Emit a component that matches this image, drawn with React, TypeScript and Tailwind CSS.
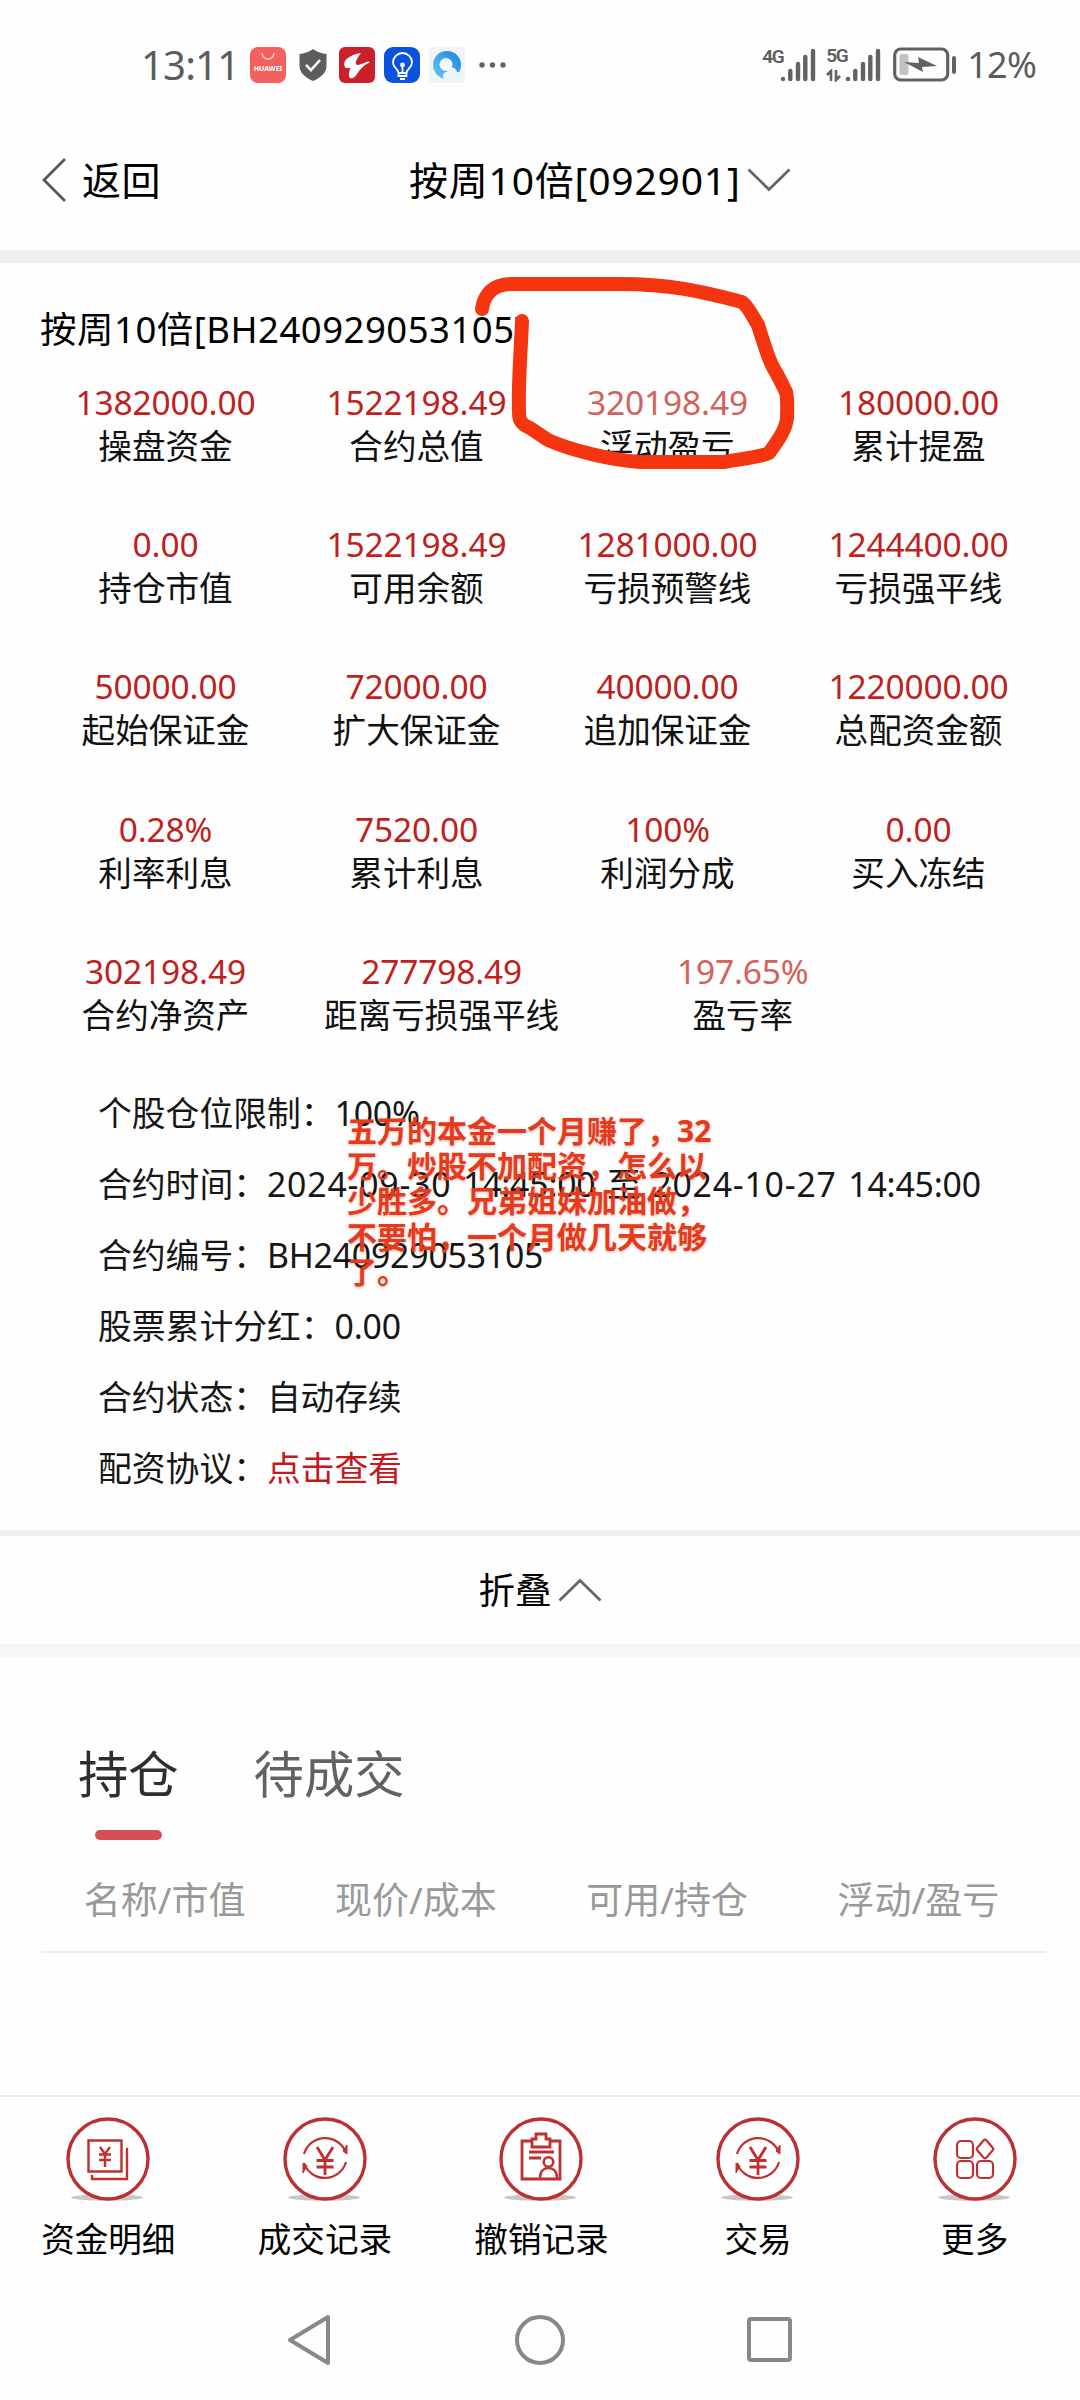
import React from 'react'

interface Metric {
  value: string
  label: string
  soft?: boolean
  width?: string
}

const metrics: Metric[] = [
  { value: '1382000.00', label: '操盘资金' },
  { value: '1522198.49', label: '合约总值' },
  { value: '320198.49', label: '浮动盈亏', soft: true },
  { value: '180000.00', label: '累计提盈' },
  { value: '0.00', label: '持仓市值' },
  { value: '1522198.49', label: '可用余额' },
  { value: '1281000.00', label: '亏损预警线' },
  { value: '1244400.00', label: '亏损强平线' },
  { value: '50000.00', label: '起始保证金' },
  { value: '72000.00', label: '扩大保证金' },
  { value: '40000.00', label: '追加保证金' },
  { value: '1220000.00', label: '总配资金额' },
  { value: '0.28%', label: '利率利息' },
  { value: '7520.00', label: '累计利息' },
  { value: '100%', label: '利润分成' },
  { value: '0.00', label: '买入冻结' },
  { value: '302198.49', label: '合约净资产' },
  { value: '277798.49', label: '距离亏损强平线', width: 'w-[30%]' },
  { value: '197.65%', label: '盈亏率', soft: true, width: 'w-[30%]' }
]

const details = [
  { label: '个股仓位限制：', value: '100%' },
  {
    label: '合约时间：',
    value: (
      <span className="[word-spacing:3px]">
        <span className="tracking-[0.800px]">2024-09-30</span> 14:45:00 至 <span className="tracking-[0.800px]">2024-10-27</span> 14:45:00
      </span>
    )
  },
  { label: '合约编号：', value: 'BH240929053105' },
  { label: '股票累计分红：', value: '0.00' },
  { label: '合约状态：', value: '自动存续' },
  { label: '配资协议：', value: '点击查看', link: true }
]

const noteLines = [
  '五万的本金一个月赚了，32',
  '万。炒股不加配资，怎么以',
  '少胜多。兄弟姐妹加油做，',
  '不要怕，一个月做几天就够',
  '了。'
]

const SignalBars: React.FC = () => (
  <svg width="36" height="34" viewBox="0 0 36 34" stroke="#626262" strokeWidth="4.4" strokeLinecap="round">
    <path d="M3 31v.1M10.3 23v8M18 16v15M25.3 9v22M33 3v28" />
  </svg>
)

const StatusBar: React.FC = () => (
  <div className="flex h-[130px] items-start justify-between pl-[141px] pr-[44px] pt-[45px] text-[#5c5c5c]">
    <div className="flex h-10 items-center">
      <span className="w-[109px] text-[40px] leading-10 tracking-[-0.8px]">13:11</span>
      <div className="flex h-9 w-9 flex-col items-center rounded-lg bg-[#f4605f]">
        <svg width="14" height="18" viewBox="0 0 14 18" fill="none" stroke="#ffd5d0" strokeWidth="1.4">
          <path d="M1 6a6 6 0 0 0 12 0" />
        </svg>
        <span className="text-[7px] font-bold leading-[7px] text-white">HUAWEI</span>
      </div>
      <svg className="ml-3" width="30" height="34" viewBox="0 0 30 34">
        <path d="M15 1C11 4 6 5.500 1.500 6v12c0 7 6 11.500 13.500 15 7.500-3.500 13.500-8 13.500-15V6C24 5.500 19 4 15 1z" fill="#5d5d5d" />
        <path d="M8 17l5 5 9-10" fill="none" stroke="#fff" strokeWidth="2.600" />
      </svg>
      <svg className="ml-[11px]" width="36" height="36" viewBox="0 0 36 36">
        <rect width="36" height="36" rx="6" fill="#cb1f2c" />
        <path d="M22 6C14 7 7 11 5.500 15c-1 4 1 7 4 6l2-.5C10 25 9 29 11 31c3 1 5-1 7-4 3-5 7-9 13-12l-2-.5-8 3c-3 1-5 0-4-3 1-3 3-6 5-8.500z" fill="#fff" />
      </svg>
      <svg className="ml-[9px]" width="36" height="36" viewBox="0 0 36 36" fill="none" stroke="#fff" strokeWidth="1.800">
        <rect width="36" height="36" rx="9" fill="#0b52e0" stroke="none" />
        <path d="M14.500 26c0-4-5.500-5-5.500-10.500a9.500 9.500 0 0 1 19 0c0 5.500-5.500 6.500-5.500 10.500zM14.500 26v3h8v-3M16 32h5M18.500 26v-7" />
        <circle cx="18.500" cy="18" r="1.500" fill="#fff" />
      </svg>
      <svg className="ml-[9px]" width="36" height="36" viewBox="0 0 36 36">
        <defs>
          <linearGradient id="ring" x1="0" y1="1" x2="1" y2="0">
            <stop offset="0" stopColor="#6cc9f5" />
            <stop offset="1" stopColor="#1683dc" />
          </linearGradient>
        </defs>
        <rect width="36" height="36" fill="#f3f4f6" />
        <circle cx="18" cy="18" r="14" fill="url(#ring)" />
        <circle cx="17" cy="17.500" r="6.500" fill="#f3f8fc" />
        <path d="M18 33c-6-1-5-8 0-8 1-6 9-6 10 0 7 0 7 8 1 8z" fill="#eaf5fd" />
      </svg>
      <svg className="ml-[14px]" width="28" height="6" viewBox="0 0 28 6" fill="#626262">
        <circle cx="3" cy="3" r="2.700" />
        <circle cx="13.500" cy="3" r="2.700" />
        <circle cx="24" cy="3" r="2.700" />
      </svg>
    </div>
    <div className="flex h-10 items-center">
      <span className="mb-[17px] w-[18px] font-['Roboto'] text-[19px] font-semibold leading-[19px] tracking-[-1.500px]">4G</span>
      <SignalBars />
      <div className="ml-[10px] flex h-[34px] w-[19px] flex-col justify-between">
        <span className="font-['Roboto'] text-[19px] font-semibold leading-[16px] tracking-[-1.500px]">5G</span>
        <svg width="17" height="13" viewBox="0 0 17 13" fill="none" stroke="#626262" strokeWidth="2.600">
          <path d="M1 6l4-4v10M10 1v10l4-4" />
        </svg>
      </div>
      <SignalBars />
      <svg className="ml-[12px]" width="65" height="36" viewBox="0 0 65 36">
        <rect x="1.700" y="2" width="53" height="31" rx="6" fill="none" stroke="#626262" strokeWidth="3.200" />
        <rect x="6.500" y="7" width="9" height="21" rx="2.500" fill="#c2c2c2" />
        <path d="M11 15l15 1-1-6 19 9-15 1 1 5z" fill="#626262" />
        <path d="M61 11v14" stroke="#626262" strokeWidth="4" strokeLinecap="round" />
      </svg>
      <span className="ml-[9px] text-[36px] leading-10 tracking-[-0.800px]">12%</span>
    </div>
  </div>
)

const Header: React.FC = () => (
  <header className="flex h-[120px] items-start pl-[41px] pt-[24px] text-[39px] leading-[52px] text-black">
    <div className="flex w-[368px] items-center">
      <svg width="26" height="44" viewBox="0 0 26 44" fill="none" stroke="#555" strokeWidth="2.800">
        <path d="M24 1L3 22l21 21" />
      </svg>
      <span className="ml-[15px] tracking-[0.400px]">返回</span>
    </div>
    <div className="flex items-center">
      <span className="tracking-[0.800px]">按周10倍[092901]</span>
      <svg className="ml-[6px]" width="44" height="24" viewBox="0 0 44 24" fill="none" stroke="#666" strokeWidth="2.800">
        <path d="M1.500 1.500L22 21.500l20.500-20" />
      </svg>
    </div>
  </header>
)

const MetricCell: React.FC<Metric> = ({ value, label, soft, width = 'w-[25%]' }) => (
  <div className={`flex h-[142.200px] flex-col items-center ${width}`}>
    <span className={`text-[33.500px] leading-[44px] tracking-[-0.150px] ${soft ? 'text-[#d2625a]' : 'text-[#c01f20]'}`}>{value}</span>
    <span className="text-[33.600px] leading-[44px] text-[#111]">{label}</span>
  </div>
)

const YenCycle: React.FC = () => (
  <>
    <path d="M21 37a22 22 0 0 1 42-1M63 45a22 22 0 0 1-42 1" strokeWidth="2.200" />
    <path d="M64 28v9l-4-3zM20 56v-10l4 3z" fill="#c0302f" strokeWidth="1" />
    <path d="M34 30l8 13 8-13M42 43v15M33.500 43.500h17M33.500 50h17" strokeWidth="2.800" />
  </>
)

const tabs = [
  {
    label: '资金明细',
    icon: (
      <>
        <path d="M22.500 23.500h33v31h-33zM60 32h1V62H26v-4" strokeWidth="2.400" />
        <path d="M34 30l5 7 5-7M39 37v13M33 37.500h12M33 43h12" strokeWidth="2.400" />
      </>
    )
  },
  { label: '成交记录', icon: <YenCycle /> },
  {
    label: '撤销记录',
    icon: (
      <>
        <path d="M33 24h-10v38h38V24H51M33 30V22h4v-5h10v5h4v8zM30 35h25M30 41h12" strokeWidth="2.800" />
        <circle cx="49.500" cy="45" r="4.800" strokeWidth="2.600" />
        <path d="M41 61c0-7 4-10 8.500-10s8.500 3 8.500 10" strokeWidth="2.600" />
      </>
    )
  },
  { label: '交易', icon: <YenCycle /> },
  {
    label: '更多',
    icon: (
      <g strokeWidth="2.200">
        <rect x="24" y="24" width="16" height="17" rx="4" />
        <rect x="24" y="44" width="16" height="17" rx="4" />
        <rect x="44" y="44" width="16" height="17" rx="4" />
        <path d="M50.500 23.500q1.500-2 3 0l6 7q1.500 1.500 0 3l-6 7q-1.500 1.500-3 0l-6-7q-1.500-1.500 0-3z" />
      </g>
    )
  }
]

const TabBar: React.FC = () => (
  <nav className="grid h-[185px] w-[1083px] grid-cols-5 border-t-2 border-[#ececec] pt-5">
    {tabs.map(tab => (
      <div key={tab.label} className="flex flex-col items-center">
        <svg width="84" height="86" viewBox="0 0 84 86" fill="none" stroke="#c0302f">
          <ellipse cx="41" cy="80.500" rx="36" ry="3.200" fill="#c9c7c6" stroke="none" />
          <circle cx="42" cy="42" r="40" fill="#fff" stroke="#bb3033" strokeWidth="3.400" />
          {tab.icon}
        </svg>
        <span className="mt-[12px] text-[33.600px] leading-[48px] text-black">{tab.label}</span>
      </div>
    ))}
  </nav>
)

const App: React.FC = () => {
  return (
    <div className="relative flex h-[2400px] w-[1080px] flex-col overflow-hidden bg-[#fefefe] font-['Noto_Sans','Noto_Sans_CJK_SC',sans-serif]">
      <StatusBar />
      <Header />
      <div className="h-[13px] bg-[#efefef]" />

      <section className="h-[1267px] px-[40px] pt-[41px]">
        <h1 className="text-[36.500px] leading-[50px] tracking-[0.500px] text-black">按周10倍[BH240929053105]</h1>
        <div className="mt-[26px] flex w-[1004px] flex-wrap">
          {metrics.map((m, i) => (
            <MetricCell key={i} {...m} />
          ))}
        </div>
        <dl className="ml-[58px] mt-[-13px]">
          {details.map(d => (
            <div key={d.label} className="flex h-[71px] items-center whitespace-nowrap text-[33.800px] text-[#161616]">
              <dt>{d.label}</dt>
              <dd className={d.link ? 'text-[#c8161d]' : 'tracking-[-0.200px]'}>{d.value}</dd>
            </div>
          ))}
        </dl>
      </section>

      <div className="flex h-[114px] items-center justify-center border-t-[6px] border-[#efefef] text-[36.500px] text-black">
        <span>折叠</span>
        <svg className="ml-[6px]" width="44" height="24" viewBox="0 0 44 24" fill="none" stroke="#666" strokeWidth="2.800">
          <path d="M1.500 22.500L22 2.500l20.500 20" />
        </svg>
      </div>
      <div className="h-[13px] bg-[#f6f6f6]" />

      <section className="h-[438px] px-[41px] pt-[82px]">
        <div className="flex gap-[75px] pl-[37px] text-[50.300px] leading-[70px]">
          <div className="flex flex-col items-center text-[#2e2e2e]">
            <span>持仓</span>
            <span className="mt-[21px] h-[10px] w-[67px] rounded-[5px] bg-[#d55054]" />
          </div>
          <span className="text-[#626262]">待成交</span>
        </div>
        <div className="mt-[33px] grid h-[80px] w-[1005px] grid-cols-4 border-b-2 border-[#eeeeee] pt-[2px] text-center text-[37px] leading-[50px] text-[#999]">
          {['名称/市值', '现价/成本', '可用/持仓', '浮动/盈亏'].map(title => (
            <span key={title} className="-ml-1">{title}</span>
          ))}
        </div>
      </section>

      <TabBar />

      <div className="flex h-[120px] items-center justify-between px-[286px]">
        <svg width="46" height="54" viewBox="0 0 46 54" fill="none" stroke="#888" strokeWidth="4" strokeLinejoin="round">
          <path d="M42 4v46L4 27z" />
        </svg>
        <svg width="52" height="52" viewBox="0 0 52 52" fill="none" stroke="#888" strokeWidth="4">
          <circle cx="27" cy="26" r="23" />
        </svg>
        <svg width="48" height="48" viewBox="0 0 48 48" fill="none" stroke="#888" strokeWidth="4">
          <rect x="3" y="3" width="41" height="41" rx="2" />
        </svg>
      </div>

      {/* hand-drawn marker loop around the floating P&L */}
      <svg className="absolute left-[460px] top-[265px]" width="350" height="215" viewBox="460 265 350 215" fill="none" stroke="#f5350f" strokeWidth="14" strokeLinecap="round" strokeLinejoin="round">
        <path d="M482 309C484 294 493 284 512 284H620C670 284 700 291 742 302C748 306 753 317 758 325C766 350 770 364 777 374L786 392C788 400 787 410 787 418C786 430 777 442 769 453C762 457 740 459 724 462H640C610 460 570 450 548 440L530 428C520 424 519 419 519 412C518 380 521 350 522 321" />
      </svg>

      {/* typed note laid over the contract details */}
      <div className="absolute left-[347px] top-[1113px] whitespace-nowrap text-[30px] font-bold leading-[35.200px] text-[#e83a1a] [text-shadow:0_1px_3px_rgba(120,60,50,0.35)]">
        {noteLines.map(line => (
          <p key={line}>{line}</p>
        ))}
      </div>
    </div>
  )
}

export default App
